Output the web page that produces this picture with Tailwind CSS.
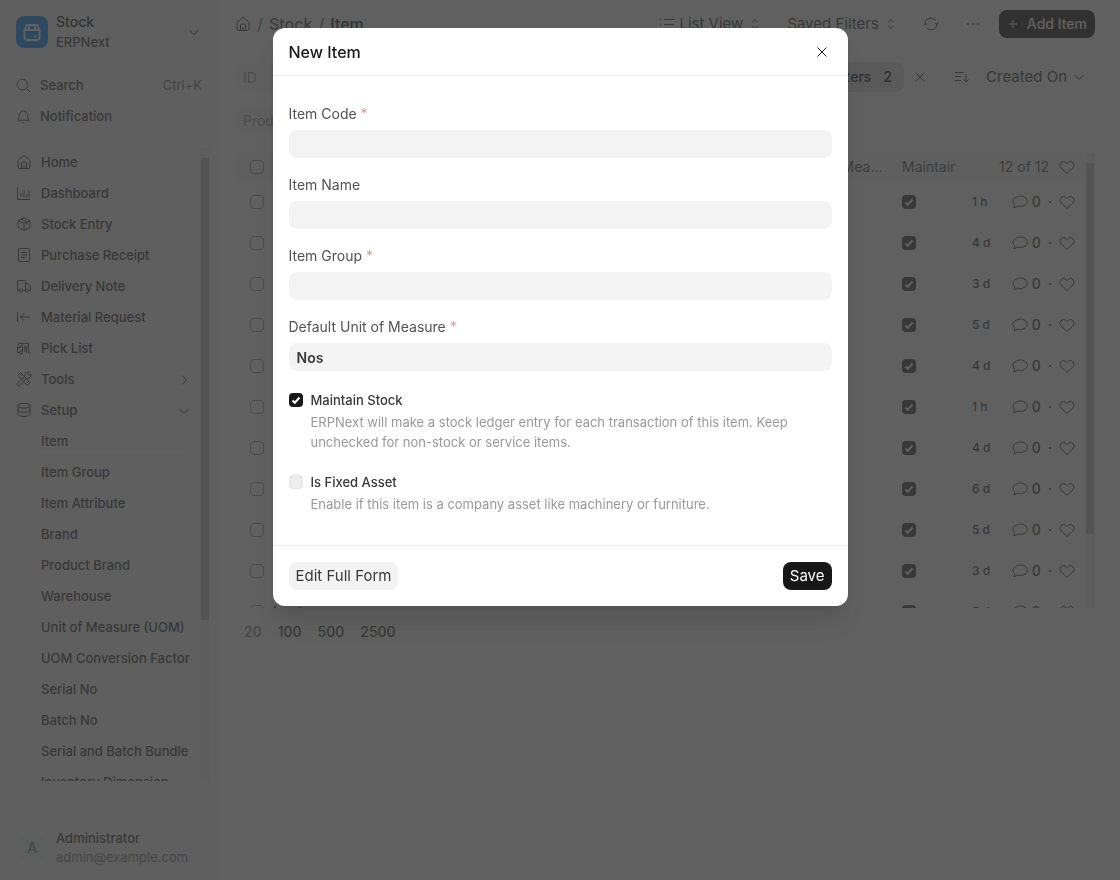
<!DOCTYPE html>
<html lang="en">
<head>
    <meta charset="UTF-8">
    <meta name="viewport" content="width=device-width, initial-scale=1">
    <title>Item</title>
    <script src="https://cdn.jsdelivr.net/npm/@tailwindcss/browser@4"></script>
</head>
<body class="h-screen overflow-hidden bg-white font-['Inter',sans-serif] text-sm text-[#383838]">

    <!-- Icons -->
    <svg class="hidden">
        <symbol id="home" viewBox="0 0 16 16"><path d="M2 6.500 8 1.300l6 5.200v6.300a1.700 1.700 0 0 1-1.700 1.700H3.700A1.700 1.700 0 0 1 2 12.800zM5.500 14.500V9a1 1 0 0 1 1-1h3a1 1 0 0 1 1 1v5.500M8 11v3.500"/></symbol>
        <symbol id="search" viewBox="0 0 16 16"><circle cx="7" cy="7" r="5.700"/><path d="m11.200 11.200 3.500 3.500"/></symbol>
        <symbol id="bell" viewBox="0 0 16 16"><path d="M2 12h12c-1-1.200-1.500-2-1.500-5.500a4.500 4.500 0 0 0-9 0C3.500 10 3 10.800 2 12zM7 14.500h2"/></symbol>
        <symbol id="chart" viewBox="0 0 16 16"><path d="M1.500 2v12.500H14M5 12V8M8 12V5M10.500 12V9.500M13 12V6"/></symbol>
        <symbol id="box" viewBox="0 0 16 16"><path d="M8 1.500 14 4.500v7l-6 3-6-3v-7zM2 4.500l6 3 6-3M8 7.500v7M5 3l6 3v2.500"/></symbol>
        <symbol id="receipt" viewBox="0 0 16 16"><rect x="2.500" y="1.500" width="11" height="13" rx="1"/><path d="M5 5.500h6M6 8h5M5 10.500h4"/></symbol>
        <symbol id="truck" viewBox="0 0 16 16"><path d="M3 12.500H1.500V3.500a1 1 0 0 1 1-1h6a1 1 0 0 1 1 1v9H6.500M9.500 5.500H12l2.500 3.500v3.500H13M9.500 12.500H10"/><circle cx="4.700" cy="12.500" r="1.600"/><circle cx="11.500" cy="12.500" r="1.600"/></symbol>
        <symbol id="request" viewBox="0 0 16 16"><path d="M1.500 3v10M14 8H4.500M8 4.500 4.500 8 8 11.500"/></symbol>
        <symbol id="pick" viewBox="0 0 16 16"><path d="M4 12.500H1.500v-5l1-4h4v9M1.500 7.500h3v-2M6.500 3.500h6v9M9 12V6.500h1.500V13M12.500 13H15"/><circle cx="5" cy="12.500" r="1.500"/></symbol>
        <symbol id="tools" viewBox="0 0 16 16"><path d="m2 4.500 2.500-3 9.500 10-2.500 3zM1.500 12 9 5a3.200 3.200 0 0 1 4-4L11.500 3 13 4.500 15 3a3.200 3.200 0 0 1-4 4l-7 7.500a1.700 1.700 0 0 1-2.500-2.500zM6 3.500 4.500 5M13 10l-1.500 1.500"/></symbol>
        <symbol id="database" viewBox="0 0 16 16"><ellipse cx="8" cy="3.800" rx="6" ry="2.300"/><path d="M2 3.800v8.400c0 1.300 2.700 2.300 6 2.300s6-1 6-2.300V3.800M2 8c0 1.300 2.700 2.300 6 2.300S14 9.300 14 8"/></symbol>
        <symbol id="down" viewBox="0 0 16 16"><path d="m3.500 6 4.500 4.500L12.500 6"/></symbol>
        <symbol id="right" viewBox="0 0 16 16"><path d="M6 3.500 10.500 8 6 12.500"/></symbol>
        <symbol id="updown" viewBox="0 0 16 16"><path d="m5.500 6 2.500-2.500L10.500 6M5.500 10l2.500 2.500 2.500-2.500"/></symbol>
        <symbol id="list" viewBox="0 0 16 16"><path d="M5 3.500h10M5 8.500h10M5 13.500h10M1 3.500h1M1 8.500h1M1 13.500h1"/></symbol>
        <symbol id="refresh" viewBox="0 0 16 16"><path d="M2 8a6 6 0 0 1 10.800-3.500M14 8a6 6 0 0 1-10.800 3.500M12 7.500l2 .8 1.500-1.800M4 8.500l-2-.8L.5 9.500"/></symbol>
        <symbol id="dots" viewBox="0 0 16 16"><path d="M3 8h.1M8 8h.1M13 8h.1"/></symbol>
        <symbol id="plus" viewBox="0 0 16 16"><path d="M8 4v8M4 8h8"/></symbol>
        <symbol id="close" viewBox="0 0 16 16"><path d="m3.500 3.500 9 9M12.500 3.500l-9 9"/></symbol>
        <symbol id="sort" viewBox="0 0 16 16"><path d="M1 3.500h9M1 7.500h6M1 11.500h6M12 5v8M9.500 10.500 12 13l2.500-2.500"/></symbol>
        <symbol id="heart" viewBox="0 0 16 16"><path d="M8 14.500 2 8.700a3.700 3.700 0 0 1 0-5.100 3.600 3.600 0 0 1 5.100 0l.9.9.9-.9a3.600 3.600 0 0 1 5.100 0 3.700 3.700 0 0 1 0 5.100z"/></symbol>
        <symbol id="comment" viewBox="0 0 16 16"><path d="M8.500 2C12 2 15.300 4.300 15.300 7.300s-3.300 5.200-6.800 5.200c-1 0-2-.2-2.800-.5L2 14l.6-3.400C1.500 9.700 1 8.600 1 7.300 1 4.300 5 2 8.500 2z"/></symbol>
        <symbol id="check" viewBox="0 0 14 14"><path d="m3.500 7.500 2.300 2.200L10.500 4.500"/></symbol>
        <symbol id="stock" viewBox="0 0 32 32"><path d="M8.500 14v8a2 2 0 0 0 2 2h11a2 2 0 0 0 2-2v-8zM8.500 14l2.500-5h10l2.500 5M13.500 9l-1 5M18.500 9l1 5M18 20.500h2"/></symbol>
    </svg>

    <div class="flex h-full">
        <!-- Sidebar -->
        <aside class="flex w-[218px] shrink-0 flex-col bg-[#f8f8f8]">
            <button type="button" class="flex items-center gap-2 px-4 pt-3 text-left">
                <span class="size-8 rounded-lg bg-[#0289f7] text-white"><svg class="size-8 fill-none stroke-current stroke-2"><use href="#stock"/></svg></span>
                <span class="flex flex-1 flex-col font-medium leading-5">
                    <span class="text-[#171717]">Stock</span>
                    <span class="text-[13px]">ERPNext</span>
                </span>
                <svg class="size-4 fill-none stroke-current"><use href="#down"/></svg>
            </button>

            <nav class="mt-[19px] flex flex-col gap-[3px] pr-4 pl-4 text-[13px] font-medium">
                <a href="#" class="flex h-7 items-center gap-[9px]">
                    <svg class="size-[15px] fill-none stroke-current"><use href="#search"/></svg>Search
                    <span class="ml-auto font-normal text-[#7c7c7c]">Ctrl+K</span>
                </a>
                <a href="#" class="flex h-7 items-center gap-[9px]"><svg class="size-[15px] fill-none stroke-current"><use href="#bell"/></svg>Notification</a>
            </nav>

            <div class="mt-[18px] flex min-h-0 flex-1 overflow-hidden">
                <nav id="menu" class="flex min-w-0 flex-1 flex-col gap-[3px] pr-2 pl-4 text-[13px] font-medium"></nav>
                <div class="mr-2 flex w-[10px] shrink-0 flex-col bg-[#f1f1f1] pt-[10px]">
                    <div class="mx-px h-[462px] bg-[#c1c1c1]"></div>
                </div>
            </div>

            <div class="mt-12 mb-[13px] flex items-center gap-2 px-4">
                <span class="grid size-8 place-items-center rounded-full bg-[#e4f5e9] text-[#278f5e]">A</span>
                <span class="flex flex-col text-[13px] leading-[19px]">
                    <span class="font-medium">Administrator</span>
                    <span class="text-[#7c7c7c]">admin@example.com</span>
                </span>
            </div>
        </aside>

        <!-- Item list -->
        <main class="flex min-w-0 flex-1 flex-col pr-[25px] pl-[17px]">
            <header class="flex h-12 items-center">
                <nav class="flex items-center gap-[6px] text-base font-medium text-[#7c7c7c]">
                    <a href="#" aria-label="Home"><svg class="size-4 fill-none stroke-[#383838]"><use href="#home"/></svg></a>
                    <span>/</span><a href="#" class="text-[#525252]">Stock</a><span>/</span><a href="#" class="text-[#171717]">Item</a>
                </nav>
                <div class="ml-auto flex items-center">
                    <button type="button" class="flex items-center gap-1 text-[15px]"><svg class="size-4 fill-none stroke-current"><use href="#list"/></svg>List View<svg class="size-4 fill-none stroke-current"><use href="#updown"/></svg></button>
                    <button type="button" class="ml-6 flex items-center gap-1 text-[15px]">Saved Filters<svg class="size-4 fill-none stroke-current"><use href="#updown"/></svg></button>
                    <button type="button" aria-label="Refresh" class="ml-6"><svg class="size-4 fill-none stroke-current"><use href="#refresh"/></svg></button>
                    <button type="button" aria-label="More" class="ml-[26px]"><svg class="size-4 fill-none stroke-current stroke-2 [stroke-linecap:round]"><use href="#dots"/></svg></button>
                    <button type="button" class="ml-[18px] flex h-7 items-center gap-[6px] rounded-lg bg-[#171717] pr-2 pl-[6px] font-medium text-white"><svg class="size-4 fill-none stroke-current"><use href="#plus"/></svg>Add Item</button>
                </div>
            </header>

            <div class="mt-[14px] flex items-center">
                <input type="text" aria-label="ID" placeholder="ID" class="h-7 w-40 rounded-lg bg-[#fafafa] px-2 placeholder:text-[#999999]">
                <div class="ml-auto flex items-center">
                    <button type="button" class="flex h-[30px] items-center gap-3 rounded-lg bg-[#e2e2e2] px-3 font-medium text-[#171717]">Filters <span class="font-semibold">2</span></button>
                    <button type="button" aria-label="Clear filters" class="ml-2"><svg class="size-4 fill-none stroke-current"><use href="#close"/></svg></button>
                    <button type="button" aria-label="Sort direction" class="ml-[26px]"><svg class="size-4 fill-none stroke-current"><use href="#sort"/></svg></button>
                    <button type="button" class="mr-2 ml-4 flex items-center gap-1 text-[15px]">Created On<svg class="size-4 fill-none stroke-current"><use href="#down"/></svg></button>
                </div>
            </div>
            <input type="text" aria-label="Product Name" placeholder="Product Name" class="mt-[14px] h-7 w-40 rounded-lg bg-[#fafafa] px-2 placeholder:text-[#999999]">

            <div class="mt-[19px] flex h-[455px] overflow-hidden">
                <div class="min-w-0 flex-1">
                    <table class="w-full table-fixed">
                        <thead>
                            <tr class="h-7 bg-[#fafafa] text-left text-[#525252]">
                                <th class="w-[38px] p-0 pl-[15px]"><input type="checkbox" aria-label="Select all" class="block size-[14px] appearance-none rounded border border-[#999999]"></th>
                                <th class="p-0 font-normal">ID</th>
                                <th class="w-[160px] p-0 pr-[14px] font-normal"><div class="truncate">Default Unit of Measure</div></th>
                                <th class="w-[54px] p-0 font-normal"><div class="overflow-hidden whitespace-nowrap">Maintain Stock</div></th>
                                <th class="w-[129px] p-0 pr-[10px] font-normal"><div class="flex items-center justify-end gap-[10px]">12 of 12<svg class="size-4 fill-none stroke-[#383838]"><use href="#heart"/></svg></div></th>
                            </tr>
                        </thead>
                        <tbody id="rows"></tbody>
                    </table>
                </div>
                <div class="flex w-[10px] shrink-0 flex-col bg-[#f1f1f1] pt-[10px]">
                    <div class="mx-px h-[371px] bg-[#c1c1c1]"></div>
                </div>
            </div>

            <div class="mt-[10px] flex h-7 w-fit items-center gap-4 px-[9px] font-medium">
                <button type="button" class="text-[#7c7c7c]">20</button>
                <button type="button">100</button>
                <button type="button">500</button>
                <button type="button">2500</button>
            </div>
        </main>
    </div>

    <!-- New Item dialog -->
    <div class="fixed inset-0 flex items-start justify-center bg-[#383838]/80 pt-7">
        <form role="dialog" aria-labelledby="dialog-title" class="w-[575px] max-w-full rounded-xl bg-white shadow-xl">
            <div class="flex h-12 items-center justify-between border-b border-[#ededed] px-4">
                <h1 id="dialog-title" class="text-base font-medium text-[#171717]">New Item</h1>
                <button type="button" aria-label="Close" class="mr-[2px]"><svg class="size-4 fill-none stroke-[#171717]"><use href="#close"/></svg></button>
            </div>

            <div class="flex flex-col px-4 pt-7 pb-[31px]">
                <label for="code" class="leading-5 text-[#525252]">Item Code <span class="text-[#e79494]">*</span></label>
                <input id="code" type="text" class="mt-[6px] h-7 rounded-lg bg-[#f3f3f3] px-2">
                <label for="name" class="mt-[17px] leading-5 text-[#525252]">Item Name</label>
                <input id="name" type="text" class="mt-[6px] h-7 rounded-lg bg-[#f3f3f3] px-2">
                <label for="group" class="mt-[17px] leading-5 text-[#525252]">Item Group <span class="text-[#e79494]">*</span></label>
                <input id="group" type="text" class="mt-[6px] h-7 rounded-lg bg-[#f3f3f3] px-2">
                <label for="uom" class="mt-[17px] leading-5 text-[#525252]">Default Unit of Measure <span class="text-[#e79494]">*</span></label>
                <input id="uom" type="text" value="Nos" class="mt-[6px] h-7 rounded-lg bg-[#f3f3f3] px-2 font-semibold">

                <div class="mt-[19px] text-[13px] leading-5">
                    <label class="flex items-center gap-2 font-medium">
                        <span class="grid"><input type="checkbox" checked class="col-start-1 row-start-1 size-[14px] appearance-none rounded bg-[#171717]"><svg class="pointer-events-none col-start-1 row-start-1 size-[14px] fill-none stroke-white stroke-2"><use href="#check"/></svg></span>
                        Maintain Stock
                    </label>
                    <p class="mt-[2px] mr-6 ml-[22px] text-[#999999]">ERPNext will make a stock ledger entry for each transaction of this item. Keep unchecked for non-stock or service items.</p>
                </div>
                <div class="mt-5 text-[13px] leading-5">
                    <label class="flex items-center gap-2 font-medium">
                        <input type="checkbox" class="size-[14px] appearance-none rounded border border-[#e2e2e2] bg-[#ededed]">
                        Is Fixed Asset
                    </label>
                    <p class="mt-[2px] mr-6 ml-[22px] text-[#999999]">Enable if this item is a company asset like machinery or furniture.</p>
                </div>
            </div>

            <div class="flex h-[61px] items-center justify-between border-t border-[#ededed] px-4 text-[15px]">
                <button type="button" class="h-7 rounded-lg bg-[#f3f3f3] px-[7px]">Edit Full Form</button>
                <button type="submit" class="h-7 rounded-lg bg-[#171717] px-[7px] text-white">Save</button>
            </div>
        </form>
    </div>

    <script>
        const menu = [
            ['home', 'Home'], ['chart', 'Dashboard'], ['box', 'Stock Entry'], ['receipt', 'Purchase Receipt'],
            ['truck', 'Delivery Note'], ['request', 'Material Request'], ['pick', 'Pick List'],
            ['tools', 'Tools', 'right'], ['database', 'Setup', 'down']
        ];
        const setup = [
            'Item', 'Item Group', 'Item Attribute', 'Brand', 'Product Brand', 'Warehouse', 'Unit of Measure (UOM)',
            'UOM Conversion Factor', 'Serial No', 'Batch No', 'Serial and Batch Bundle', 'Inventory Dimension'
        ];

        document.getElementById('menu').innerHTML = menu.map(([icon, label, arrow]) => `
            <a href="#" class="flex h-7 shrink-0 items-center gap-[9px]">
                <svg class="size-4 fill-none stroke-current"><use href="#${icon}"/></svg>${label}
                ${arrow ? `<svg class="mt-[2px] ml-auto size-4 fill-none stroke-current"><use href="#${arrow}"/></svg>` : ''}
            </a>
        `).join('') + setup.map((label, i) => `
            <a href="#" class="ml-4 flex h-7 shrink-0 items-center rounded-lg px-[9px] whitespace-nowrap ${i === 0 ? 'bg-[#fafafa] shadow-xs' : ''}">${label}</a>
        `).join('');

        // name, last modified
        const items = [
            ['Camera', '1 h'], ['Backpack', '4 d'], ['Television', '3 d'], ['Coffee Mug', '5 d'], ['Sneakers', '4 d'], ['Headphones', '1 h'],
            ['T-shirt', '4 d'], ['Book', '6 d'], ['Smartphone', '5 d'], ['Notebook', '3 d'], ['Laptop', '5 d'], ['Desk', '4 d']
        ];

        document.getElementById('rows').innerHTML = items.map(([name, modified]) => `
            <tr class="h-[41px]">
                <td class="p-0 pl-[15px]"><input type="checkbox" aria-label="Select ${name}" class="block size-[14px] appearance-none rounded border border-[#999999]"></td>
                <td class="p-0 font-medium text-[#171717]">${name}</td>
                <td class="p-0"></td>
                <td class="p-0"><span class="grid"><input type="checkbox" checked disabled aria-label="Maintain Stock" class="col-start-1 row-start-1 size-[14px] appearance-none rounded bg-[#383838]"><svg class="col-start-1 row-start-1 size-[14px] fill-none stroke-white stroke-2"><use href="#check"/></svg></span></td>
                <td class="p-0 pr-[10px] pl-4">
                    <div class="flex items-center">
                        <span class="text-xs font-medium">${modified}</span>
                        <svg class="ml-auto size-4 fill-none stroke-current"><use href="#comment"/></svg>
                        <span class="ml-1 font-medium">0</span>
                        <span class="mx-[7px] font-medium">·</span>
                        <svg class="size-4 fill-none stroke-current"><use href="#heart"/></svg>
                    </div>
                </td>
            </tr>
        `).join('');
    </script>
</body>
</html>
